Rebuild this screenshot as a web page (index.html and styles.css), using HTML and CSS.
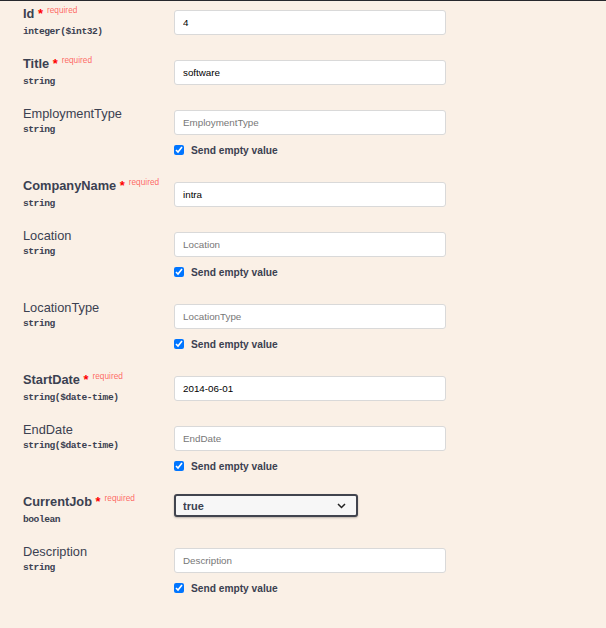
FILE: index.html
```html
<!DOCTYPE html>
<html>
<head>
<meta charset="utf-8">
<link rel="stylesheet" href="styles.css">
</head>
<body>
<div class="params">
  <div class="row">
    <div class="name-col">
      <div class="pname required">Id <span class="star">*</span><span class="req">required</span></div>
      <div class="ptype">integer($int32)</div>
    </div>
    <div class="val-col"><input class="field" type="text" value="4" placeholder="Id"></div>
  </div>
  <div class="row">
    <div class="name-col">
      <div class="pname required">Title <span class="star">*</span><span class="req">required</span></div>
      <div class="ptype">string</div>
    </div>
    <div class="val-col"><input class="field" type="text" value="software" placeholder="Title"></div>
  </div>
  <div class="row">
    <div class="name-col">
      <div class="pname">EmploymentType</div>
      <div class="ptype">string</div>
    </div>
    <div class="val-col">
      <input class="field" type="text" placeholder="EmploymentType">
      <label class="empty"><input type="checkbox" checked>Send empty value</label>
    </div>
  </div>
  <div class="row">
    <div class="name-col">
      <div class="pname required">CompanyName <span class="star">*</span><span class="req">required</span></div>
      <div class="ptype">string</div>
    </div>
    <div class="val-col"><input class="field" type="text" value="intra" placeholder="CompanyName"></div>
  </div>
  <div class="row">
    <div class="name-col">
      <div class="pname">Location</div>
      <div class="ptype">string</div>
    </div>
    <div class="val-col">
      <input class="field" type="text" placeholder="Location">
      <label class="empty"><input type="checkbox" checked>Send empty value</label>
    </div>
  </div>
  <div class="row">
    <div class="name-col">
      <div class="pname">LocationType</div>
      <div class="ptype">string</div>
    </div>
    <div class="val-col">
      <input class="field" type="text" placeholder="LocationType">
      <label class="empty"><input type="checkbox" checked>Send empty value</label>
    </div>
  </div>
  <div class="row">
    <div class="name-col">
      <div class="pname required">StartDate <span class="star">*</span><span class="req">required</span></div>
      <div class="ptype">string($date-time)</div>
    </div>
    <div class="val-col"><input class="field" type="text" value="2014-06-01" placeholder="StartDate"></div>
  </div>
  <div class="row">
    <div class="name-col">
      <div class="pname">EndDate</div>
      <div class="ptype">string($date-time)</div>
    </div>
    <div class="val-col">
      <input class="field" type="text" placeholder="EndDate">
      <label class="empty"><input type="checkbox" checked>Send empty value</label>
    </div>
  </div>
  <div class="row">
    <div class="name-col">
      <div class="pname required">CurrentJob <span class="star">*</span><span class="req">required</span></div>
      <div class="ptype">boolean</div>
    </div>
    <div class="val-col">
      <div class="select-wrap">
        <select class="sel">
          <option>--</option>
          <option selected>true</option>
          <option>false</option>
        </select>
        <svg class="chev" width="9" height="6" viewBox="0 0 9 6"><path d="M1 1 L4.5 4.5 L8 1" fill="none" stroke="#222" stroke-width="1.5"/></svg>
      </div>
    </div>
  </div>
  <div class="row">
    <div class="name-col">
      <div class="pname">Description</div>
      <div class="ptype">string</div>
    </div>
    <div class="val-col">
      <input class="field" type="text" placeholder="Description">
      <label class="empty"><input type="checkbox" checked>Send empty value</label>
    </div>
  </div>
</div>
</body>
</html>
```

FILE: styles.css
```css
html, body {
  margin: 0;
  padding: 0;
  background: #faf0e6;
}
body {
  min-height: 628px;
  border-top: 1px solid #26282d;
  box-sizing: border-box;
  font-family: "Liberation Sans", Arial, sans-serif;
  color: #3b4151;
}
.params {
  display: flex;
  flex-direction: column;
}
.row {
  display: grid;
  grid-template-columns: 151px 272px;
  align-items: start;
  padding: 8px 0 17px 23px;
}
.row:first-child {
  padding-top: 9px;
}
.name-col {
  margin-top: -4px;
  height: 29px;
}
.pname {
  font-size: 12.8px;
  line-height: 15px;
  font-weight: 400;
  color: #3b4151;
  white-space: nowrap;
}
.pname.required {
  font-weight: 700;
}
.star {
  color: #ff0000;
}
.req {
  position: relative;
  top: -5px;
  padding-left: 4px;
  font-size: 8.3px;
  font-weight: 400;
  color: rgba(255, 0, 0, 0.6);
}
.ptype {
  margin-top: 2px;
  font-family: "Liberation Mono", "DejaVu Sans Mono", monospace;
  font-size: 9.6px;
  line-height: 14px;
  font-weight: 700;
  letter-spacing: -0.45px;
  color: #3b4151;
}
.val-col {
  display: flex;
  flex-direction: column;
}
.field {
  box-sizing: border-box;
  width: 272px;
  height: 25px;
  margin: 0;
  padding: 0 8px;
  border: 1px solid #d9d9d9;
  border-radius: 3px;
  background: #fff;
  font-family: "Liberation Sans", Arial, sans-serif;
  font-size: 9.8px;
  color: #000;
  outline: none;
}
.field::placeholder {
  color: #777;
}
.empty {
  display: flex;
  align-items: center;
  gap: 7px;
  margin-top: 8px;
  height: 14px;
  font-size: 10.2px;
  font-weight: 700;
  color: #3b4151;
}
.empty input {
  width: 10px;
  height: 10px;
  margin: 0;
  accent-color: #0075ff;
}
.select-wrap {
  position: relative;
  width: 184px;
  height: 23px;
  margin-top: -4px;
  margin-bottom: 6px;
}
.sel {
  appearance: none;
  -webkit-appearance: none;
  box-sizing: border-box;
  width: 184px;
  height: 23px;
  margin: 0;
  padding: 0 30px 0 7px;
  border: 2px solid #41444e;
  border-radius: 3px;
  background: #f7f7f7;
  box-shadow: 0 1px 2px 0 rgba(0, 0, 0, 0.25);
  font-family: "Liberation Sans", Arial, sans-serif;
  font-size: 11px;
  font-weight: 700;
  color: #3b4151;
  outline: none;
}
.chev {
  position: absolute;
  right: 12px;
  top: 9px;
  pointer-events: none;
}
```
